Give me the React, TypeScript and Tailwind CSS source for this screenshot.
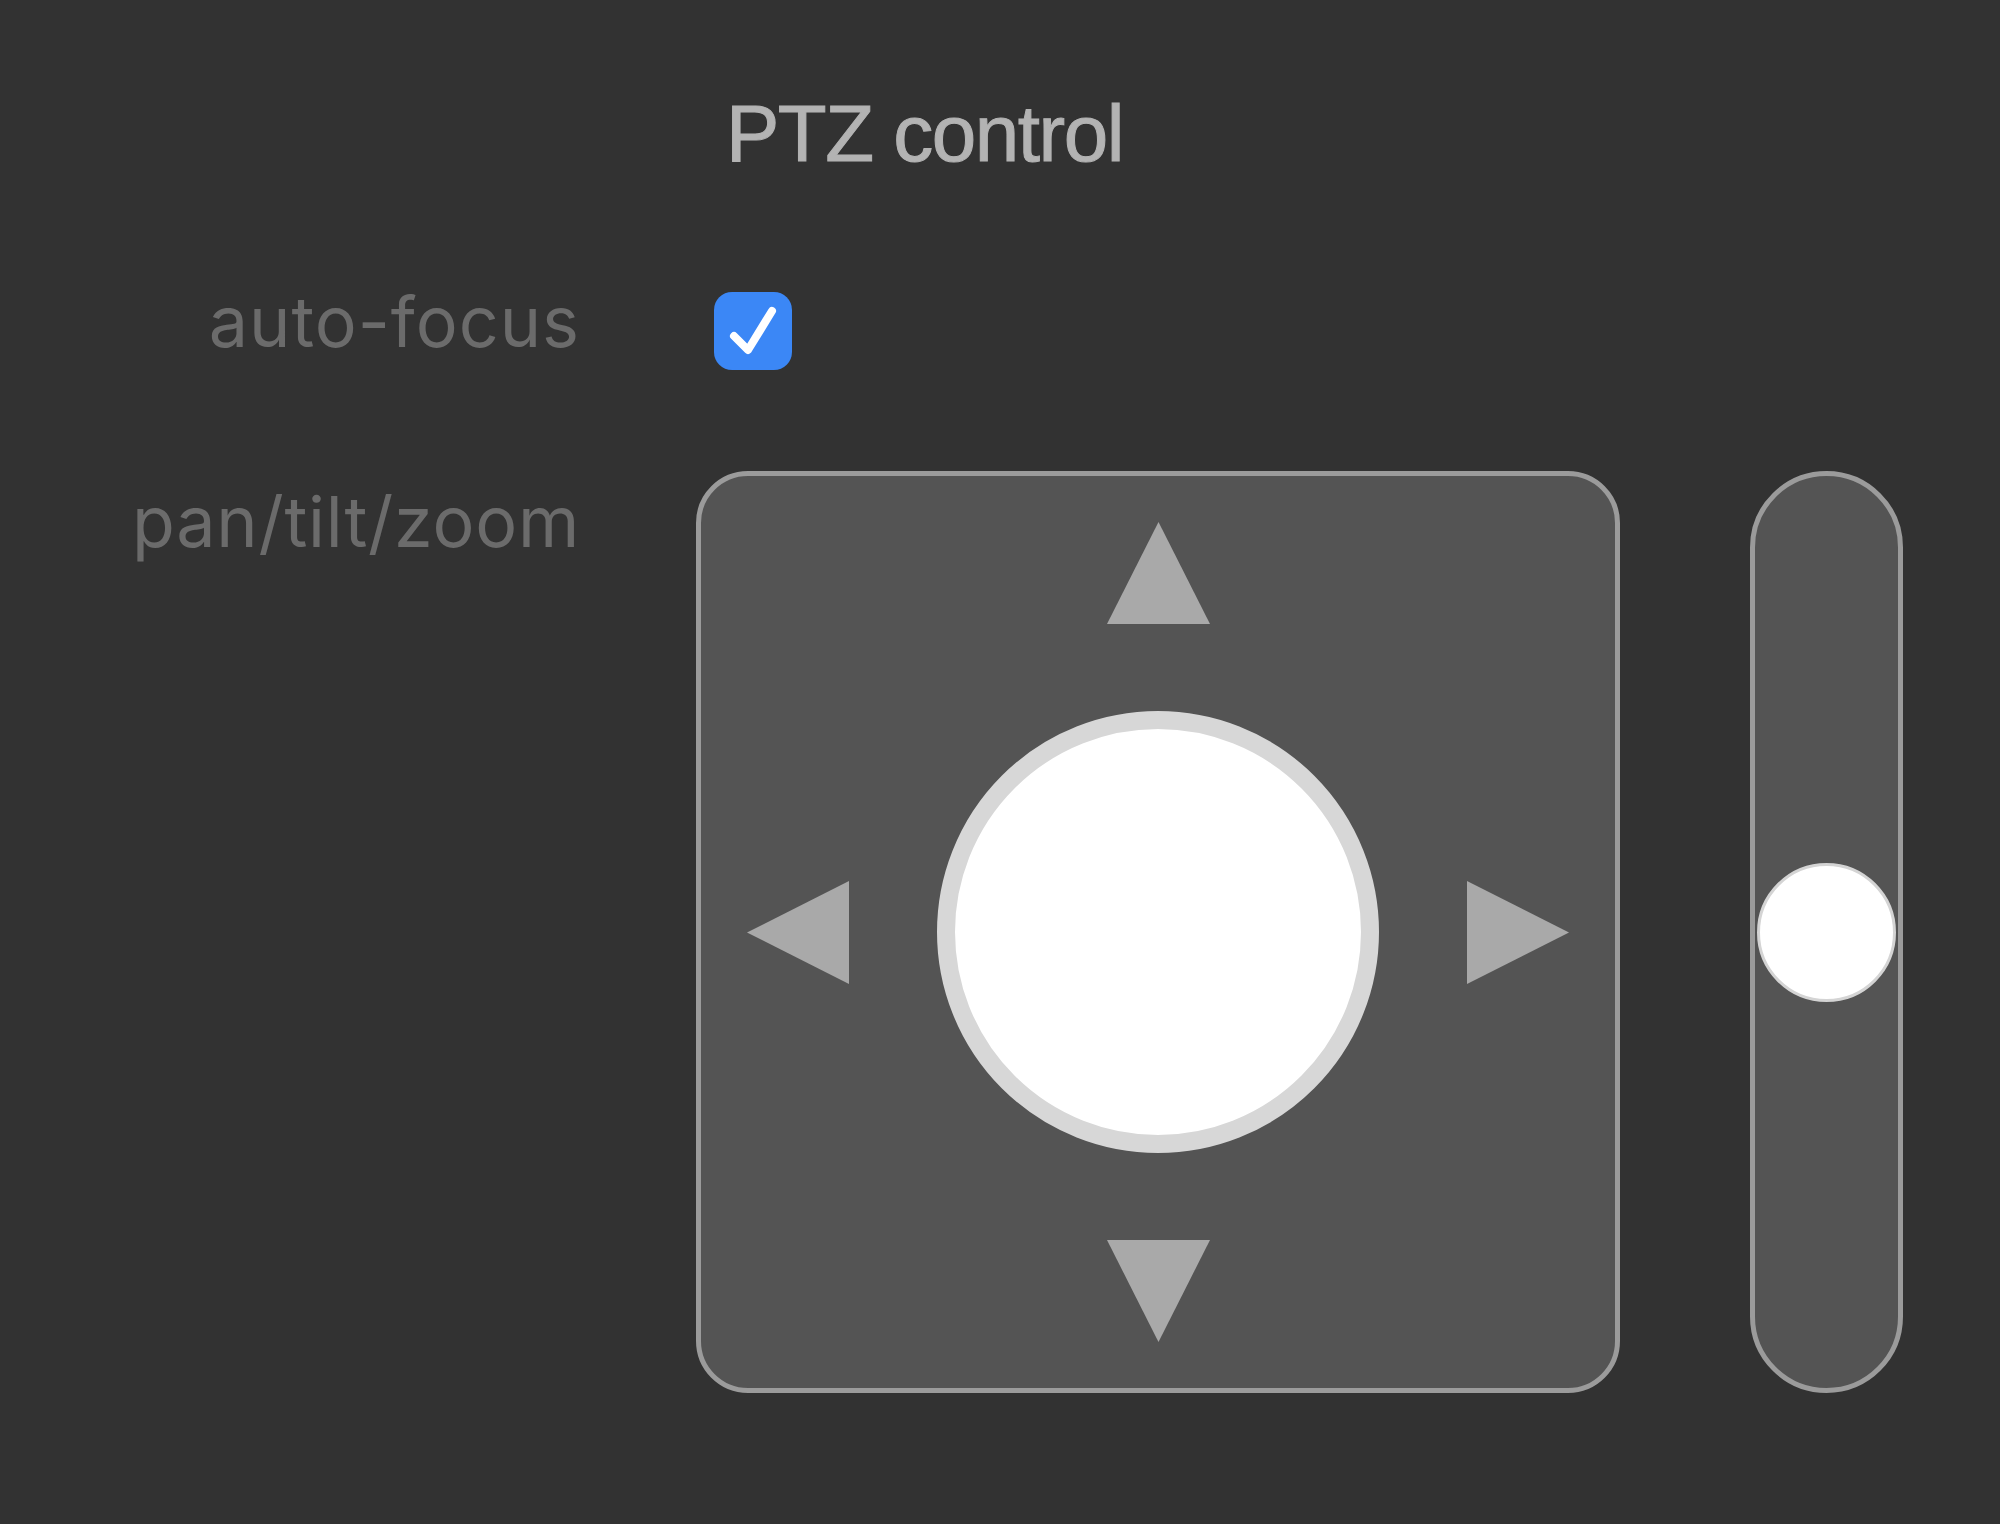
import React from 'react';

const Triangle: React.FC<{ dir: 'up' | 'down' | 'left' | 'right' }> = ({ dir }) => {
  const points = {
    up: '51.5,0 103,102 0,102',
    down: '0,0 103,0 51.5,102',
    left: '0,51.5 102,0 102,103',
    right: '0,0 102,51.5 0,103',
  }[dir];
  const vertical = dir === 'up' || dir === 'down';
  return (
    <svg
      width={vertical ? 103 : 102}
      height={vertical ? 102 : 103}
      viewBox={vertical ? '0 0 103 102' : '0 0 102 103'}
      className="block shrink-0"
    >
      <polygon points={points} fill="#a9a9a9" />
    </svg>
  );
};

export default function App() {
  return (
    <div
      className="min-h-screen bg-[#323232]"
      style={{ fontFamily: 'Inter, "Liberation Sans", sans-serif' }}
    >
      <div className="grid grid-cols-[580px_auto] gap-x-[116px] pt-[94px]">
        <div />
        <h1
          className="ml-[30px] text-[80px] leading-none font-normal tracking-[-1.5px] text-[#b3b3b3]"
          style={{ fontFamily: '"Liberation Sans", Arial, sans-serif', WebkitTextStroke: '1px #b3b3b3' }}
        >
          PTZ control
        </h1>

        {/* auto-focus */}
        <div className="mt-[113px] text-right text-[70px] leading-none tracking-[1px] text-[#6b6b6b]">
          auto-focus
        </div>
        <div className="mt-[113px]">
          <div className="ml-[18px] mt-[5px] flex h-[78px] w-[78px] items-center justify-center rounded-[18px] bg-[#3b87f6]">
            <svg width="78" height="78" viewBox="0 0 78 78">
              <polyline
                points="20,44 34,58 58,19"
                fill="none"
                stroke="white"
                strokeWidth="8"
                strokeLinecap="round"
                strokeLinejoin="round"
              />
            </svg>
          </div>
        </div>

        {/* pan/tilt/zoom */}
        <div className="mt-[101px] pt-[16px] text-right text-[70px] leading-none tracking-[0.75px] text-[#6b6b6b]">
          pan/tilt/zoom
        </div>
        <div className="mt-[101px] flex items-start gap-[130px]">
          <div className="flex h-[922px] w-[924px] flex-col items-center justify-between rounded-[52px] border-[5px] border-[#9b9b9b] bg-[#545454] px-[46px] py-[46px]">
            <Triangle dir="up" />
            <div className="flex w-full items-center justify-between">
              <Triangle dir="left" />
              <div className="h-[442px] w-[442px] rounded-full border-[18px] border-[#d7d7d7] bg-white" />
              <Triangle dir="right" />
            </div>
            <Triangle dir="down" />
          </div>
          <div className="flex h-[922px] w-[153px] items-center justify-center rounded-full border-[5px] border-[#9b9b9b] bg-[#545454]">
            <div className="h-[139px] w-[139px] rounded-full border-[3px] border-[#d4d4d4] bg-white" />
          </div>
        </div>
      </div>
    </div>
  );
}
